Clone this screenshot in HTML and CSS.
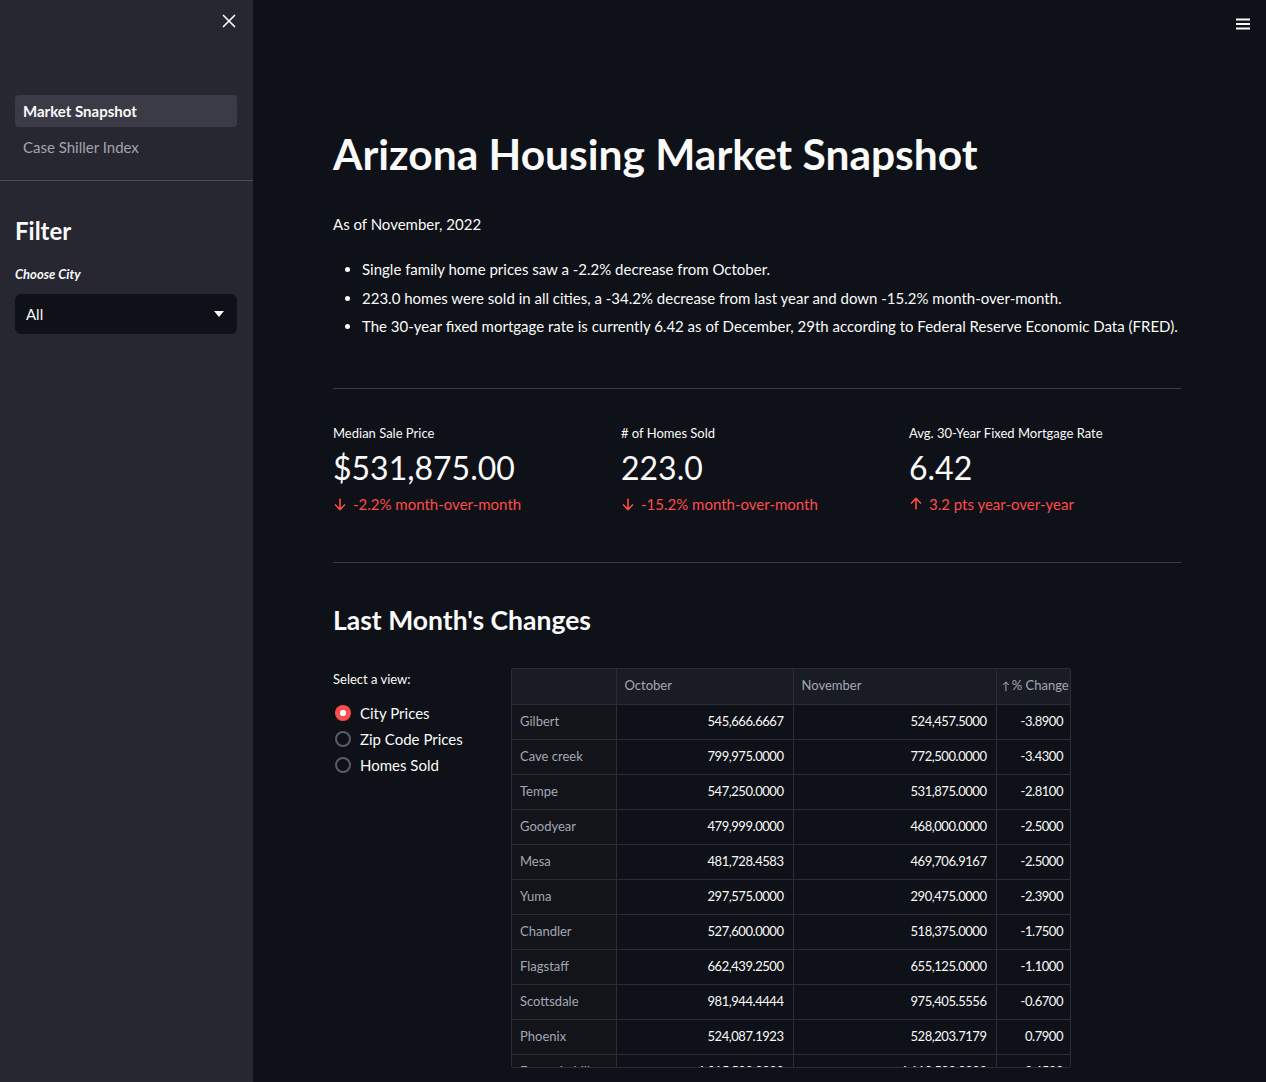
FILE: index.html
```html
<!DOCTYPE html>
<html>
<head>
<meta charset="utf-8">
<link rel="stylesheet" href="styles.css">
</head>
<body>
<aside class="sidebar">
  <div class="sb-top">
    <svg class="close" width="14" height="14" viewBox="0 0 14 14"><path d="M1.5 1.5 L12.5 12.5 M12.5 1.5 L1.5 12.5" stroke="#fafafa" stroke-width="1.7" stroke-linecap="round"/></svg>
  </div>
  <nav class="nav">
    <div class="nav-item active">Market Snapshot</div>
    <div class="nav-item">Case Shiller Index</div>
  </nav>
  <div class="sb-divider"></div>
  <div class="sb-body">
    <h3 class="sb-title">Filter</h3>
    <div class="sb-label">Choose City</div>
    <div class="select"><span>All</span><svg width="10" height="6" viewBox="0 0 10 6"><path d="M0 0 L10 0 L5 6 Z" fill="#fafafa"/></svg></div>
  </div>
</aside>
<main class="main">
  <div class="topbar">
    <svg width="16" height="12" viewBox="0 0 16 12"><path d="M1 1.5 H15 M1 6 H15 M1 10.5 H15" stroke="#fafafa" stroke-width="1.8"/></svg>
  </div>
  <div class="content">
    <h1 class="title">Arizona Housing Market Snapshot</h1>
    <p class="asof">As of November, 2022</p>
    <ul class="bullets">
      <li>Single family home prices saw a -2.2% decrease from October.</li>
      <li>223.0 homes were sold in all cities, a -34.2% decrease from last year and down -15.2% month-over-month.</li>
      <li>The 30-year fixed mortgage rate is currently 6.42 as of December, 29th according to Federal Reserve Economic Data (FRED).</li>
    </ul>
    <hr class="divider">
    <div class="metrics">
      <div class="metric">
        <div class="m-label">Median Sale Price</div>
        <div class="m-value">$531,875.00</div>
        <div class="m-delta"><svg width="14" height="14" viewBox="0 0 14 14"><path d="M7 1.5 V12.5 M2 7.5 L7 12.5 L12 7.5" stroke="#ff4b4b" stroke-width="1.6" fill="none"/></svg>-2.2% month-over-month</div>
      </div>
      <div class="metric">
        <div class="m-label"># of Homes Sold</div>
        <div class="m-value">223.0</div>
        <div class="m-delta"><svg width="14" height="14" viewBox="0 0 14 14"><path d="M7 1.5 V12.5 M2 7.5 L7 12.5 L12 7.5" stroke="#ff4b4b" stroke-width="1.6" fill="none"/></svg>-15.2% month-over-month</div>
      </div>
      <div class="metric">
        <div class="m-label">Avg. 30-Year Fixed Mortgage Rate</div>
        <div class="m-value">6.42</div>
        <div class="m-delta"><svg width="14" height="14" viewBox="0 0 14 14"><path d="M7 12.5 V1.5 M2 6.5 L7 1.5 L12 6.5" stroke="#ff4b4b" stroke-width="1.6" fill="none"/></svg>3.2 pts year-over-year</div>
      </div>
    </div>
    <hr class="divider d2">
    <h2 class="subtitle">Last Month's Changes</h2>
    <div class="changes">
      <div class="views">
        <div class="v-label">Select a view:</div>
        <label class="radio"><span class="dot on"></span>City Prices</label>
        <label class="radio"><span class="dot"></span>Zip Code Prices</label>
        <label class="radio"><span class="dot"></span>Homes Sold</label>
      </div>
      <div class="table-wrap">
        <table class="grid">
          <thead>
            <tr><th class="idx"></th><th class="c1">October</th><th class="c2">November</th><th class="c3"><span class="sort">↑</span>% Change</th></tr>
          </thead>
          <tbody>
            <tr><td class="idx">Gilbert</td><td>545,666.6667</td><td>524,457.5000</td><td>-3.8900</td></tr>
            <tr><td class="idx">Cave creek</td><td>799,975.0000</td><td>772,500.0000</td><td>-3.4300</td></tr>
            <tr><td class="idx">Tempe</td><td>547,250.0000</td><td>531,875.0000</td><td>-2.8100</td></tr>
            <tr><td class="idx">Goodyear</td><td>479,999.0000</td><td>468,000.0000</td><td>-2.5000</td></tr>
            <tr><td class="idx">Mesa</td><td>481,728.4583</td><td>469,706.9167</td><td>-2.5000</td></tr>
            <tr><td class="idx">Yuma</td><td>297,575.0000</td><td>290,475.0000</td><td>-2.3900</td></tr>
            <tr><td class="idx">Chandler</td><td>527,600.0000</td><td>518,375.0000</td><td>-1.7500</td></tr>
            <tr><td class="idx">Flagstaff</td><td>662,439.2500</td><td>655,125.0000</td><td>-1.1000</td></tr>
            <tr><td class="idx">Scottsdale</td><td>981,944.4444</td><td>975,405.5556</td><td>-0.6700</td></tr>
            <tr><td class="idx">Phoenix</td><td>524,087.1923</td><td>528,203.7179</td><td>0.7900</td></tr>
            <tr><td class="idx">Fountain hills</td><td>1,015,500.0000</td><td>1,113,500.0000</td><td>9.6500</td></tr>
          </tbody>
        </table>
      </div>
    </div>
  </div>
</main>
</body>
</html>
```

FILE: styles.css
```css
* { box-sizing: border-box; }
html, body { margin: 0; padding: 0; }
body {
  display: flex;
  height: 1082px;
  overflow: hidden;
  background: #0e1117;
  color: #fafafa;
  font-family: "Lato", "Noto Sans", sans-serif;
}
.sidebar {
  width: 253px;
  flex: none;
  background: #262730;
  height: 100%;
}
.sb-top {
  height: 42px;
  display: flex;
  justify-content: flex-end;
  align-items: center;
  padding-right: 17px;
}
.nav {
  padding: 53px 16px 17px 15px;
  display: flex;
  flex-direction: column;
  gap: 4px;
}
.nav-item {
  height: 32px;
  line-height: 32px;
  padding-left: 8px;
  font-size: 15px;
  color: #a3a4ab;
  border-radius: 4px;
}
.nav-item.active {
  background: #3a3b47;
  color: #fafafa;
  font-weight: 700;
}
.sb-divider { height: 1px; background: #4b4c56; }
.sb-body { padding: 35px 16px 0 15px; }
.sb-title {
  margin: 0;
  font-size: 24px;
  line-height: 30px;
  font-weight: 700;
}
.sb-label {
  margin-top: 18px;
  font-size: 13px;
  line-height: 20px;
  font-style: italic;
  font-weight: 700;
}
.select {
  margin-top: 10px;
  height: 40px;
  background: #0e1117;
  border-radius: 6px;
  display: flex;
  align-items: center;
  justify-content: space-between;
  padding: 0 13px 0 11px;
  font-size: 15px;
}
.main {
  flex: 1;
  position: relative;
  height: 100%;
}
.topbar {
  position: absolute;
  top: 14px;
  right: 15px;
}
.content {
  width: 848px;
  margin-left: 80px;
  padding-top: 127px;
}
.title {
  margin: 0;
  font-size: 42.5px;
  line-height: 53px;
  font-weight: 700;
}
.asof {
  margin: 32px 0 0;
  font-size: 15px;
  line-height: 24px;
}
.bullets {
  margin: 21px 0 0;
  padding-left: 29px;
  font-size: 15px;
}
.bullets li {
  line-height: 24px;
  margin-bottom: 4.5px;
}
.divider {
  border: none;
  height: 1px;
  background: #3a3c44;
  margin: 50px 0 0;
}
.metrics {
  display: grid;
  grid-template-columns: 288px 288px 272px;
  margin-top: 34px;
}
.m-label { font-size: 13px; line-height: 20px; }
.m-value {
  font-size: 32px;
  line-height: 44px;
  margin-top: 3px;
}
.m-delta {
  margin-top: 3px;
  font-size: 15px;
  line-height: 22px;
  color: #ff4b4b;
  display: flex;
  align-items: center;
  gap: 6px;
}
.d2 { margin-top: 47px; }
.subtitle {
  margin: 39px 0 0;
  font-size: 26.5px;
  line-height: 36px;
  font-weight: 700;
}
.changes {
  display: flex;
  margin-top: 30px;
}
.views { width: 178px; flex: none; padding-top: 1px; }
.v-label { font-size: 13px; line-height: 20px; }
.radio {
  display: flex;
  align-items: center;
  gap: 9px;
  height: 26px;
  font-size: 15px;
}
.radio:first-of-type { margin-top: 11px; }
.dot {
  width: 16px;
  height: 16px;
  border-radius: 50%;
  border: 2px solid #5a5c63;
  margin-left: 2px;
  flex: none;
}
.dot.on {
  border: none;
  background: radial-gradient(circle, #fff 0 3px, #ff4b4b 3.5px);
}
.table-wrap {
  width: 560px;
  height: 400px;
  overflow: hidden;
  border: 1px solid #2b2d35;
  border-radius: 2px;
}
.grid {
  border-collapse: collapse;
  font-size: 13px;
  letter-spacing: -0.45px;
  table-layout: fixed;
  width: 560px;
}
.grid th, .grid td {
  border: 1px solid #2b2d35;
  height: 35px;
  padding: 0 9px 2px 8px;
  white-space: nowrap;
  overflow: hidden;
}
.grid thead th {
  background: #1a1c24;
  color: #a3a8b4;
  font-weight: 400;
  text-align: left;
  height: 35px;
  border-top: none;
  letter-spacing: 0;
}
.grid td { text-align: right; color: #fafafa; }
.grid td.idx { text-align: left; color: #a3a8b4; background: #12141a; letter-spacing: 0; }
.grid th.idx { width: 104px; border-left: none; }
.grid td.idx { border-left: none; }
.grid th.c1 { width: 177px; }
.grid th.c2 { width: 203px; }
.grid th.c3 { width: 76px; padding-left: 5px; padding-right: 0; border-right: none; }
.grid td:last-child { border-right: none; }
.sort { font-size: 11px; margin-right: 2px; }
```
